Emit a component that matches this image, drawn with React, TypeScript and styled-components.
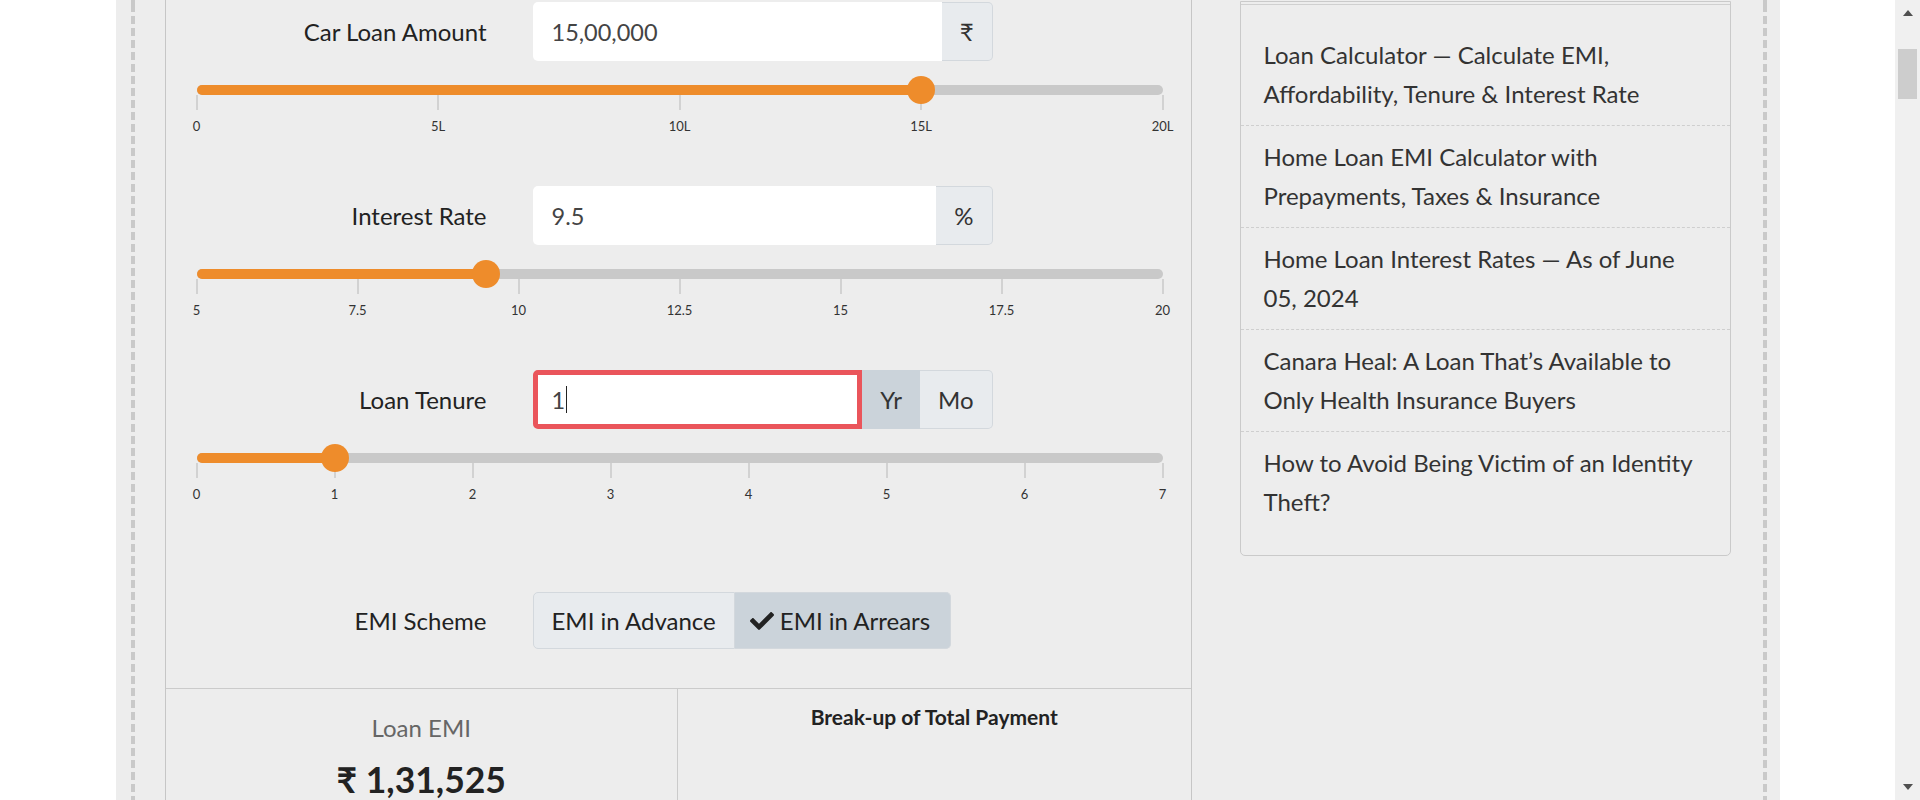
import React from "react";
import styled, { createGlobalStyle } from "styled-components";
import { FaCheck } from "react-icons/fa";

const GlobalStyle = createGlobalStyle`
  html, body { margin: 0; padding: 0; overflow: hidden; background: #fff; }
  body { font-family: Lato, "Noto Sans", "DejaVu Sans", sans-serif; color: #222; }
  * { box-sizing: border-box; }
`;

const ORANGE = "#ee8c2b";

const Screen = styled.div`
  display: flex;
  width: 1920px;
  height: 800px;
  overflow: hidden;
`;

const Viewport = styled.div`
  flex: 1;
  min-width: 0;
  display: flex;
  justify-content: center;
  background: #fff;
`;

const Wrapper = styled.div`
  width: 1664px;
  flex-shrink: 0;
  display: flex;
  align-items: stretch;
  padding: 0 13px 0 15px;
  background: #ededed;
`;

const Rail = styled.div`
  width: 4px;
  flex-shrink: 0;
  background: repeating-linear-gradient(to bottom, #c9c9c9 0 8px, transparent 8px 12px);
  background-position: 0 4px;
`;

const Content = styled.div`
  flex: 1;
  display: flex;
  align-items: stretch;
  gap: 48px;
  padding: 0 32px 0 30px;
`;

const MainPanel = styled.div`
  width: 1027px;
  flex-shrink: 0;
  display: flex;
  flex-direction: column;
  border-left: 1px solid #c6c6c6;
  border-right: 1px solid #c6c6c6;
`;

const FormSection = styled.div`
  padding-top: 2px;
`;

const Field = styled.div`
  padding-bottom: 53px;
`;

const FieldRow = styled.div`
  display: grid;
  grid-template-columns: 321px 460px;
  column-gap: 46px;
  align-items: center;
`;

const Label = styled.div`
  text-align: right;
  font-size: 24px;
  color: #222;
`;

const InputGroup = styled.div`
  display: flex;
  height: 59px;
`;

const TextField = styled.div<{ $invalid?: boolean }>`
  flex: 1;
  display: flex;
  align-items: center;
  background: #fff;
  border-radius: 5px 0 0 5px;
  border: ${(p) => (p.$invalid ? "5px solid #ea555b" : "none")};
  padding-left: ${(p) => (p.$invalid ? "14px" : "19px")};
  font-size: 23.5px;
  color: #444;
`;

const Caret = styled.span`
  display: inline-block;
  width: 1px;
  height: 27px;
  margin-left: 1px;
  background: #222;
`;

const Addon = styled.div<{ $active?: boolean; $last?: boolean }>`
  display: flex;
  align-items: center;
  justify-content: center;
  padding: 0 18px;
  font-size: 24px;
  color: #333;
  background: ${(p) => (p.$active ? "#cbd3da" : "#e8ebee")};
  border: ${(p) => (p.$active ? "none" : "1px solid #d3d8dd")};
  border-left: none;
  border-radius: ${(p) => (p.$last ? "0 5px 5px 0" : "0")};
`;

const SliderWrap = styled.div`
  margin-top: 24px;
  padding: 0 28px 0 31px;
`;

const Track = styled.div`
  position: relative;
  height: 10px;
  border-radius: 5px;
  background: #c9c9c9;
`;

const Fill = styled.div`
  position: absolute;
  left: 0;
  top: 0;
  bottom: 0;
  border-radius: 5px;
  background: ${ORANGE};
`;

const Thumb = styled.div`
  position: absolute;
  top: 50%;
  width: 28px;
  height: 28px;
  border-radius: 50%;
  background: ${ORANGE};
  transform: translate(-50%, -50%);
`;

const Ticks = styled.div`
  display: flex;
  justify-content: space-between;
`;

const Tick = styled.div`
  width: 0;
  display: flex;
  flex-direction: column;
  align-items: center;
`;

const TickLine = styled.div`
  width: 2px;
  height: 15px;
  flex-shrink: 0;
  background: #d2d2d2;
`;

const TickLabel = styled.div`
  margin-top: 9px;
  font-size: 13px;
  line-height: 14px;
  white-space: nowrap;
  color: #333;
`;

const SchemeRow = styled(FieldRow)`
  padding: 38px 0 39px;
  border-bottom: 1px solid #cbcbcb;
`;

const ButtonGroup = styled.div`
  display: flex;
  height: 57px;
`;

const SchemeButton = styled.div<{ $active?: boolean; $pos: "first" | "last" }>`
  display: flex;
  align-items: center;
  gap: 6px;
  padding: ${(p) => (p.$active ? "0 20px 0 15px" : "0 18px")};
  font-size: 24px;
  color: #222;
  background: ${(p) => (p.$active ? "#cbd3da" : "#e8ebee")};
  border: 1px solid #d3d8dd;
  border-left: ${(p) => (p.$pos === "last" ? "none" : "1px solid #d3d8dd")};
  border-radius: ${(p) => (p.$pos === "first" ? "5px 0 0 5px" : "0 5px 5px 0")};
`;

const Results = styled.div`
  flex: 1;
  display: grid;
  grid-template-columns: 1fr 1fr;
`;

const ResultCol = styled.div<{ $divider?: boolean }>`
  text-align: center;
  border-right: ${(p) => (p.$divider ? "1px solid #cbcbcb" : "none")};
`;

const EmiLabel = styled.div`
  padding-top: 25px;
  font-size: 24px;
  line-height: 28px;
  color: #666;
`;

const EmiValue = styled.div`
  margin-top: 18px;
  font-size: 35.5px;
  line-height: 40px;
  font-weight: 700;
  color: #222;
`;

const BreakTitle = styled.div`
  padding-top: 16px;
  font-size: 21px;
  line-height: 24px;
  font-weight: 700;
  color: #222;
`;

const Sidebar = styled.div`
  width: 491px;
  flex-shrink: 0;
  align-self: flex-start;
  margin-top: 1px;
  border: 1px solid #cacaca;
  border-radius: 0 0 5px 5px;
`;

const TopRule = styled.div`
  height: 3px;
  border-bottom: 1px solid #d0d0d0;
`;

const LinkList = styled.ul`
  list-style: none;
  margin: 0;
  padding: 19px 0 22px;
`;

const LinkItem = styled.li`
  padding: 11px 23px 12px;
  font-size: 24px;
  line-height: 39px;
  color: #333;
  border-bottom: 1px dashed #cfcfcf;
  &:last-child {
    border-bottom: none;
  }
`;

const Scrollbar = styled.div`
  width: 25px;
  flex-shrink: 0;
  display: flex;
  flex-direction: column;
  background: #f0f0f0;
`;

const ArrowBox = styled.div`
  height: 26px;
  display: flex;
  align-items: center;
  justify-content: center;
`;

const ScrollTrack = styled.div`
  flex: 1;
  padding: 23px 3px 0;
`;

const ScrollThumb = styled.div`
  height: 50px;
  background: #cdcdcd;
`;

type SliderProps = { ticks: string[]; pct: number };

function Slider({ ticks, pct }: SliderProps) {
  return (
    <SliderWrap>
      <Track>
        <Fill style={{ width: `${pct}%` }} />
        <Thumb style={{ left: `${pct}%` }} />
      </Track>
      <Ticks>
        {ticks.map((t) => (
          <Tick key={t}>
            <TickLine />
            <TickLabel>{t}</TickLabel>
          </Tick>
        ))}
      </Ticks>
    </SliderWrap>
  );
}

const links = [
  "Loan Calculator — Calculate EMI, Affordability, Tenure & Interest Rate",
  "Home Loan EMI Calculator with Prepayments, Taxes & Insurance",
  "Home Loan Interest Rates — As of June 05, 2024",
  "Canara Heal: A Loan That’s Available to Only Health Insurance Buyers",
  "How to Avoid Being Victim of an Identity Theft?",
];

export default function App() {
  return (
    <>
      <GlobalStyle />
      <Screen>
        <Viewport>
          <Wrapper>
            <Rail />
            <Content>
              <MainPanel>
                <FormSection>
                  <Field>
                    <FieldRow>
                      <Label>Car Loan Amount</Label>
                      <InputGroup>
                        <TextField>15,00,000</TextField>
                        <Addon $last>₹</Addon>
                      </InputGroup>
                    </FieldRow>
                    <Slider ticks={["0", "5L", "10L", "15L", "20L"]} pct={75} />
                  </Field>
                  <Field>
                    <FieldRow>
                      <Label>Interest Rate</Label>
                      <InputGroup>
                        <TextField>9.5</TextField>
                        <Addon $last>%</Addon>
                      </InputGroup>
                    </FieldRow>
                    <Slider
                      ticks={["5", "7.5", "10", "12.5", "15", "17.5", "20"]}
                      pct={30}
                    />
                  </Field>
                  <Field>
                    <FieldRow>
                      <Label>Loan Tenure</Label>
                      <InputGroup>
                        <TextField $invalid>
                          1<Caret />
                        </TextField>
                        <Addon $active>Yr</Addon>
                        <Addon $last>Mo</Addon>
                      </InputGroup>
                    </FieldRow>
                    <Slider
                      ticks={["0", "1", "2", "3", "4", "5", "6", "7"]}
                      pct={(1 / 7) * 100}
                    />
                  </Field>
                </FormSection>
                <SchemeRow>
                  <Label>EMI Scheme</Label>
                  <ButtonGroup>
                    <SchemeButton $pos="first">EMI in Advance</SchemeButton>
                    <SchemeButton $pos="last" $active>
                      <FaCheck size={24} />
                      EMI in Arrears
                    </SchemeButton>
                  </ButtonGroup>
                </SchemeRow>
                <Results>
                  <ResultCol $divider>
                    <EmiLabel>Loan EMI</EmiLabel>
                    <EmiValue>₹ 1,31,525</EmiValue>
                  </ResultCol>
                  <ResultCol>
                    <BreakTitle>Break-up of Total Payment</BreakTitle>
                  </ResultCol>
                </Results>
              </MainPanel>
              <Sidebar>
                <TopRule />
                <LinkList>
                  {links.map((l) => (
                    <LinkItem key={l}>{l}</LinkItem>
                  ))}
                </LinkList>
              </Sidebar>
            </Content>
            <Rail />
          </Wrapper>
        </Viewport>
        <Scrollbar>
          <ArrowBox>
            <svg width="10" height="6" viewBox="0 0 10 6">
              <polygon points="5,0 10,6 0,6" fill="#505050" />
            </svg>
          </ArrowBox>
          <ScrollTrack>
            <ScrollThumb />
          </ScrollTrack>
          <ArrowBox>
            <svg width="10" height="6" viewBox="0 0 10 6">
              <polygon points="0,0 10,0 5,6" fill="#505050" />
            </svg>
          </ArrowBox>
        </Scrollbar>
      </Screen>
    </>
  );
}
